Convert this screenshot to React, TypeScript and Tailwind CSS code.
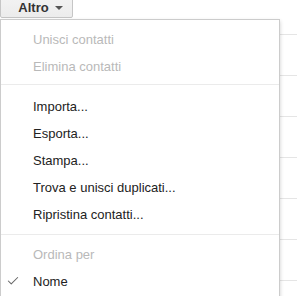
import { Check } from "lucide-react";

const font = { fontFamily: '"Liberation Sans", Arial, sans-serif' };

function Item({ label, disabled, checked }: { label: string; disabled?: boolean; checked?: boolean }) {
  return (
    <div
      className={
        "relative flex h-[27px] items-center pl-[32px] text-[13px] " +
        (disabled ? "text-[#b9b9b9]" : "text-[#222]")
      }
    >
      {checked && (
        <Check className="absolute left-[5px] top-[6px] h-[14px] w-[14px] text-[#666]" strokeWidth={1.8} />
      )}
      {label}
    </div>
  );
}

function Separator({ top, bottom }: { top: string; bottom: string }) {
  return <div className={"h-px bg-[#ebebeb] " + top + " " + bottom} />;
}

export default function App() {
  const rows = Array.from({ length: 8 });
  return (
    <div className="relative h-[296px] w-[297px] overflow-hidden bg-white" style={font}>
      <div className="flex h-[18px] w-[73px] items-end">
        <div className="flex h-[28px] w-[73px] -mt-[10px] items-center justify-center gap-[6px] rounded-b-[2px] border border-[#c6c6c6] bg-gradient-to-b from-[#f5f5f5] to-[#ececec] pl-[8px] pb-[10px] text-[13px] font-bold text-[#333]">
          <span className="mt-[18px]">Altro</span>
          <span className="mt-[18px] h-0 w-0 border-x-[4px] border-t-[4px] border-x-transparent border-t-[#555]" />
        </div>
      </div>
      <div className="-mt-[24px]">
        {rows.map((_, i) => (
          <div key={i} className="h-[41px] border-b border-[#e5e5e5]" />
        ))}
      </div>

      <div className="absolute left-0 top-[19px] w-[280px] border border-[#ccc] bg-white pt-[6px] pb-[20px] shadow-[0_2px_4px_rgba(0,0,0,0.2)]">
        <Item label="Unisci contatti" disabled />
        <Item label="Elimina contatti" disabled />
        <Separator top="mt-[4px]" bottom="mb-[8px]" />
        <Item label="Importa..." />
        <Item label="Esporta..." />
        <Item label="Stampa..." />
        <Item label="Trova e unisci duplicati..." />
        <Item label="Ripristina contatti..." />
        <Separator top="mt-[6px]" bottom="mb-[6px]" />
        <Item label="Ordina per" disabled />
        <Item label="Nome" checked />
      </div>
    </div>
  );
}
